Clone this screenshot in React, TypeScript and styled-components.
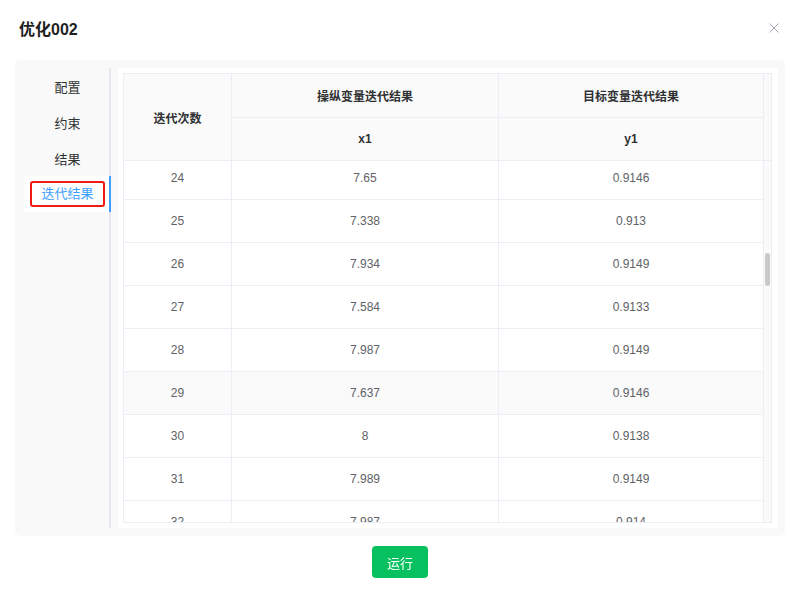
import React, { useLayoutEffect, useRef, useState } from "react";
import styled, { createGlobalStyle } from "styled-components";

const GlobalStyle = createGlobalStyle`
  html, body {
    margin: 0;
    padding: 0;
    background: #ffffff;
  }
  body {
    font-family: "Liberation Sans", "Noto Sans CJK SC", sans-serif;
  }
  * { box-sizing: border-box; }
`;

const Dialog = styled.div`
  width: 800px;
  height: 593px;
  display: flex;
  flex-direction: column;
  background: #fff;
`;

const Header = styled.div`
  height: 60px;
  display: flex;
  align-items: center;
  justify-content: space-between;
  padding: 0 20px 0 19px;
`;

const Title = styled.div`
  font-size: 16px;
  font-weight: bold;
  color: #1f1f1f;
  line-height: 20px;
`;

const CloseButton = styled.button`
  border: none;
  background: transparent;
  padding: 0;
  width: 12px;
  height: 12px;
  display: flex;
  align-items: center;
  justify-content: center;
  margin-top: -4px;
  cursor: pointer;
`;

const Panel = styled.div`
  margin: 0 15px;
  height: 476px;
  background: #f9f9f9;
  border-radius: 6px;
  padding: 8px 7px 8px 9px;
  display: flex;
  gap: 7px;
`;

const Nav = styled.div`
  width: 87px;
  flex: none;
  display: flex;
  flex-direction: column;
  border-right: 2px solid #e4e7ed;
`;

const NavItem = styled.div<{ $active?: boolean }>`
  height: 36px;
  display: flex;
  align-items: center;
  justify-content: center;
  margin-right: -2px;
  padding-left: 2px;
  border-right: 2px solid ${(p) => (p.$active ? "#409eff" : "transparent")};
  background: ${(p) => (p.$active ? "#ffffff" : "transparent")};
  color: ${(p) => (p.$active ? "#409eff" : "#303133")};
  font-size: 13px;
`;

const Marked = styled.span`
  display: inline-block;
  border: 2px solid #f21b0f;
  border-radius: 3px;
  padding: 3px 9px;
  line-height: 16px;
`;

const Content = styled.div`
  flex: 1;
  background: #ffffff;
  padding: 5px 6px 5px 5px;
`;

const TableWrap = styled.div`
  width: 649px;
  height: 450px;
  border: 1px solid #ebeef5;
  display: flex;
  flex-direction: column;
`;

const HeadGrid = styled.div`
  display: grid;
  grid-template-columns: 108px 267px 265px 7px;
  grid-template-rows: 44px 43px;
  background: #fafafa;
`;

const HeadCell = styled.div<{ $row?: string; $col?: string }>`
  grid-row: ${(p) => p.$row || "auto"};
  grid-column: ${(p) => p.$col || "auto"};
  display: flex;
  align-items: center;
  justify-content: center;
  border-right: 1px solid #ebeef5;
  border-bottom: 1px solid #ebeef5;
  font-size: 12px;
  font-weight: bold;
  color: #303133;
`;

const Gutter = styled.div`
  grid-row: 1 / 3;
  grid-column: 4;
  border-bottom: 1px solid #ebeef5;
`;

const BodyArea = styled.div`
  flex: 1;
  min-height: 0;
  display: flex;
`;

const BodyScroll = styled.div`
  width: 640px;
  flex: none;
  overflow-y: scroll;
  overflow-x: hidden;
  scrollbar-width: none;
  &::-webkit-scrollbar {
    display: none;
  }
`;

const Track = styled.div`
  flex: 1;
  background: #fafafa;
  padding: 0 1px;
`;

const Thumb = styled.div`
  width: 5px;
  background: #c9c9c9;
  border-radius: 3px;
`;

const Row = styled.div<{ $hover?: boolean }>`
  display: grid;
  grid-template-columns: 108px 267px 265px;
  height: 43px;
  background: ${(p) => (p.$hover ? "#fafafa" : "#ffffff")};
`;

const Cell = styled.div`
  display: flex;
  align-items: center;
  justify-content: center;
  border-right: 1px solid #ebeef5;
  border-bottom: 1px solid #ebeef5;
  font-size: 12px;
  color: #606266;
`;

const Footer = styled.div`
  display: flex;
  justify-content: center;
  padding-top: 10px;
`;

const RunButton = styled.button`
  width: 56px;
  height: 32px;
  border: none;
  border-radius: 4px;
  background: #07c160;
  color: #ffffff;
  font-family: "Liberation Sans", "Noto Sans CJK SC", sans-serif;
  font-size: 13px;
  padding: 0;
  cursor: pointer;
`;

const known: Record<number, [string, string]> = {
  24: ["7.65", "0.9146"],
  25: ["7.338", "0.913"],
  26: ["7.934", "0.9149"],
  27: ["7.584", "0.9133"],
  28: ["7.987", "0.9149"],
  29: ["7.637", "0.9146"],
  30: ["8", "0.9138"],
  31: ["7.989", "0.9149"],
  32: ["7.987", "0.914"],
};

const ROW_COUNT = 92;
const ROW_H = 43;
const VIEW_H = 361;
const INITIAL_SCROLL = 993;

const rows = Array.from({ length: ROW_COUNT }, (_, i) => {
  const n = i + 1;
  if (known[n]) return { n, x: known[n][0], y: known[n][1] };
  const a = ((n * 7919) % 700) / 1000;
  const x = (7.3 + a).toFixed(3).replace(/0+$/, "").replace(/\.$/, "");
  const b = ((n * 104729) % 20) / 10000;
  const y = (0.913 + b).toFixed(4).replace(/0+$/, "").replace(/\.$/, "");
  return { n, x, y };
});

export default function App() {
  const bodyRef = useRef<HTMLDivElement>(null);
  const [scrollTop, setScrollTop] = useState(INITIAL_SCROLL);

  useLayoutEffect(() => {
    if (bodyRef.current) bodyRef.current.scrollTop = INITIAL_SCROLL;
  }, []);

  const total = ROW_COUNT * ROW_H;
  const thumbH = Math.max(20, Math.round((VIEW_H * VIEW_H) / total));
  const thumbTop = Math.round((scrollTop / (total - VIEW_H)) * (VIEW_H - thumbH)) + 1;

  return (
    <>
      <GlobalStyle />
      <Dialog>
        <Header>
          <Title>优化002</Title>
          <CloseButton aria-label="close">
            <svg width="10" height="10" viewBox="0 0 10 10">
              <path d="M0.5 0.5 L9.5 9.5 M9.5 0.5 L0.5 9.5" stroke="#a8abb2" strokeWidth="1" fill="none" />
            </svg>
          </CloseButton>
        </Header>
        <Panel>
          <Nav>
            <NavItem>配置</NavItem>
            <NavItem>约束</NavItem>
            <NavItem>结果</NavItem>
            <NavItem $active>
              <Marked>迭代结果</Marked>
            </NavItem>
          </Nav>
          <Content>
            <TableWrap>
              <HeadGrid>
                <HeadCell $row="1 / 3" $col="1">迭代次数</HeadCell>
                <HeadCell $row="1" $col="2">操纵变量迭代结果</HeadCell>
                <HeadCell $row="1" $col="3">目标变量迭代结果</HeadCell>
                <Gutter />
                <HeadCell $row="2" $col="2">x1</HeadCell>
                <HeadCell $row="2" $col="3">y1</HeadCell>
              </HeadGrid>
              <BodyArea>
                <BodyScroll
                  ref={bodyRef}
                  onScroll={(e) => setScrollTop((e.target as HTMLDivElement).scrollTop)}
                >
                  {rows.map((r) => (
                    <Row key={r.n} $hover={r.n === 29}>
                      <Cell>{r.n}</Cell>
                      <Cell>{r.x}</Cell>
                      <Cell>{r.y}</Cell>
                    </Row>
                  ))}
                </BodyScroll>
                <Track>
                  <Thumb style={{ marginTop: thumbTop, height: thumbH }} />
                </Track>
              </BodyArea>
            </TableWrap>
          </Content>
        </Panel>
        <Footer>
          <RunButton>运行</RunButton>
        </Footer>
      </Dialog>
    </>
  );
}
